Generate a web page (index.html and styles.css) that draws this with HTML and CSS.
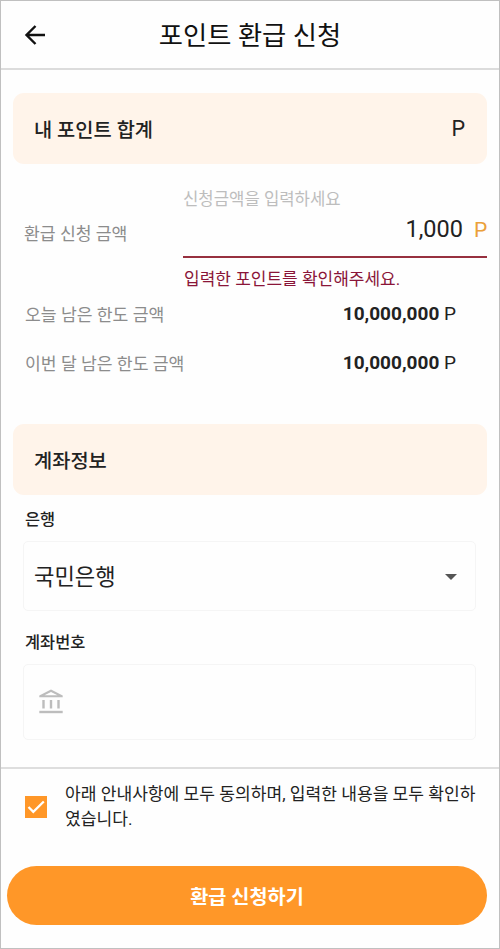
FILE: index.html
```html
<!DOCTYPE html>
<html lang="ko">
<head>
    <meta charset="UTF-8">
    <meta name="viewport" content="width=device-width, initial-scale=1.0">
    <title>포인트 환급 신청</title>
    <link rel="stylesheet" href="styles.css">
</head>
<body>
    <header>
        <svg class="back" viewBox="0 0 24 24" fill="none" stroke="#111" stroke-width="2.4">
            <path d="M22 12H4M12.5 3L3.5 12l9 9"/>
        </svg>
        <h1>포인트 환급 신청</h1>
    </header>

    <main>
        <div class="banner">
            <h2>내 포인트 합계</h2>
            <span class="total">P</span>
        </div>

        <!-- Refund amount -->
        <section class="amounts">
            <div class="request">
                <span class="label">환급 신청 금액</span>
                <div class="field">
                    <div class="hint">신청금액을 입력하세요</div>
                    <div class="value"><span class="number">1,000</span><span class="unit">P</span></div>
                    <div class="error">입력한 포인트를 확인해주세요.</div>
                </div>
            </div>
            <div class="limit">
                <span class="label">오늘 남은 한도 금액</span>
                <span><b>10,000,000</b> P</span>
            </div>
            <div class="limit">
                <span class="label">이번 달 남은 한도 금액</span>
                <span><b>10,000,000</b> P</span>
            </div>
        </section>

        <div class="banner">
            <h2>계좌정보</h2>
        </div>

        <!-- Bank account -->
        <section class="account">
            <h3>은행</h3>
            <div class="box bank">
                <span>국민은행</span>
                <svg class="caret" viewBox="0 0 12 6"><path d="M0 0h12L6 6z" fill="#555"/></svg>
            </div>
            <h3>계좌번호</h3>
            <div class="box number-box">
                <svg class="bank-icon" viewBox="0 0 24 25" fill="none" stroke="#bdbdbd">
                    <path d="M0.300 8.300V6.400L12 0.500l11.700 5.900v1.900z" fill="#bdbdbd" stroke="none"/>
                    <path d="M5.500 6.200L12 3l6.500 3.200z" fill="#fff" stroke="none"/>
                    <path d="M4.500 11v8.500M12 11v8.500M19.500 11v8.500" stroke-width="2.400"/>
                    <path d="M0.300 23h23.400" stroke-width="2.400"/>
                </svg>
            </div>
        </section>
    </main>

    <footer>
        <div class="agree">
            <svg class="check" viewBox="0 0 22 22">
                <rect width="22" height="22" fill="#ff9728"/>
                <path d="M3.500 11l4.800 4.800L18.800 5.500" fill="none" stroke="#fff" stroke-width="2.300"/>
            </svg>
            <p>아래 안내사항에 모두 동의하며, 입력한 내용을 모두 확인하였습니다.</p>
        </div>
        <button>환급 신청하기</button>
    </footer>
</body>
</html>
```
FILE: styles.css
```css
* { box-sizing: border-box; }
body { display: flex; flex-direction: column; height: 949px; margin: 0; border: 1px solid #c0c0c0; background: #fefefe; color: #222; font-family: Roboto, "Noto Sans CJK KR", sans-serif; font-size: 17.2px; }
h1, h2, h3, p { margin: 0; }
svg { display: block; flex: none; }

header { display: grid; grid-template-columns: 80px 1fr 80px; align-items: center; height: 69px; border-bottom: 2px solid #dcdcdc; }
.back { width: 24px; height: 24px; margin-left: 22px; }
h1 { padding-bottom: 2px; color: #111; font-size: 26.3px; font-weight: 400; text-align: center; white-space: nowrap; }

main { height: 697px; padding: 23px 12px 0; }
.banner { display: flex; align-items: center; justify-content: space-between; height: 71px; padding: 0 22px 1px 21px; border-radius: 11px; background: #fff4ea; }
h2 { font-size: 19.8px; font-weight: 500; }
.total { font-size: 21.5px; }

.amounts { height: 260px; padding: 24px 0 0 11px; }
.label { color: #8c8c8c; }
.request { display: flex; height: 101px; }
.request .label { width: 159px; padding-top: 34px; line-height: 24px; }
.field { flex: 1; }
.hint { height: 24px; line-height: 24px; color: #bdbdbd; font-size: 16.7px; }
.value { display: flex; align-items: center; justify-content: flex-end; height: 46px; padding-bottom: 11px; border-bottom: 2px solid #97303f; }
.number { font-size: 23.5px; }
.unit { width: 13px; margin: 3px 0 0 11px; color: #eba03a; font-size: 21px; }
.error { padding-left: 1px; line-height: 42px; color: #8a1538; font-size: 17px; }
.limit { display: flex; align-items: center; justify-content: space-between; height: 49px; padding: 0 31px 0 1px; }
.limit span { font-size: 19px; }
.limit .label { font-size: 17.2px; }

.account { padding: 0 11px 0 10px; }
h3 { height: 46px; padding-left: 2px; font-size: 16.4px; font-weight: 500; line-height: 49px; }
.box { display: flex; align-items: center; border: 1px solid #f5f5f5; border-radius: 5px; }
.bank { justify-content: space-between; height: 70px; margin-bottom: 7px; padding: 0 18px 0 10px; font-size: 22.2px; }
.bank span { padding-bottom: 2px; }
.caret { width: 12px; height: 6px; margin-top: 2px; }
.number-box { height: 76px; padding: 0 0 2px 15px; }
.bank-icon { width: 24px; height: 25px; }

footer { flex: 1; padding: 12px 12px 0 6px; border-top: 2px solid #dedede; }
.agree { display: flex; align-items: center; gap: 18px; height: 52px; padding-left: 18px; }
.check { width: 22px; height: 22px; }
.agree p { width: 412px; line-height: 25px; font-size: 17.1px; word-break: break-all; }
button { display: block; width: 480px; height: 59px; margin-top: 33px; border: none; border-radius: 30px; background: #ff9728; color: #fff; font-family: inherit; font-size: 19.7px; font-weight: 700; }
```
